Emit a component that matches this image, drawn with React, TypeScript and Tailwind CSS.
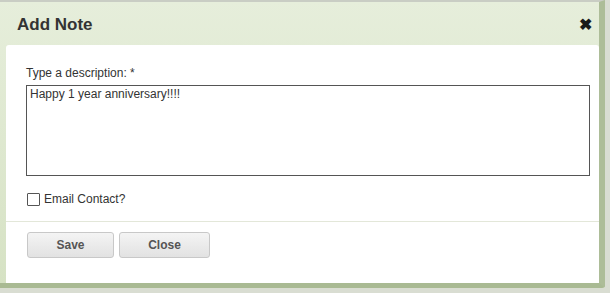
import React from "react";

export default function App() {
  return (
    <div className="w-[610px] h-[293px] bg-[#d9ddd2] overflow-hidden" style={{ fontFamily: '"Liberation Sans", Arial, sans-serif' }}>
      <div className="w-[605px] h-[288px] flex flex-col border-t-2 border-t-[#c9cdc4] bg-gradient-to-b from-[#e6eedb] to-[#d6e2c4] border-r-[6px] border-r-[#adbd98] border-b-[5px] border-b-[#a9ba93] rounded-br-[3px]">
        <div className="h-[43px] flex items-center justify-between pl-[17px] pr-[7px] shrink-0">
          <span className="text-[17px] font-bold text-[#333] leading-none mt-[1px]">Add Note</span>
          <span className="text-[16px] text-[#1a1a1a] leading-none mt-[3px] font-bold">✖</span>
        </div>
        <div className="flex-1 ml-[6px] mr-0 bg-white rounded-t-[3px] flex flex-col">
          <div className="px-[20px] pt-[21px] pb-[0px] flex flex-col">
            <label className="text-[12px] text-[#333] leading-[14px]">Type a description: *</label>
            <div className="mt-[5px] h-[91px] w-[564px] border border-[#555] px-[3px] pt-[1px] text-[12px] text-[#333] leading-[14px]">
              Happy 1 year anniversary!!!!
            </div>
            <div className="mt-[17px] flex items-center gap-[4px] ml-[1px]">
              <span className="w-[13px] h-[13px] border border-[#555] bg-white rounded-[1px]" />
              <span className="text-[12px] text-[#333] leading-[14px] -mt-[2px]">Email Contact?</span>
            </div>
          </div>
          <div className="mt-[15px] border-t border-[#e3e7d9]" />
          <div className="px-[21px] pt-[10px] flex gap-[5px]">
            <button className="w-[87px] h-[26px] rounded-[3px] border border-[#c8c8c8] bg-gradient-to-b from-[#f4f4f4] to-[#e2e2e2] text-[12px] font-bold text-[#555]">Save</button>
            <button className="w-[91px] h-[26px] rounded-[3px] border border-[#c8c8c8] bg-gradient-to-b from-[#f4f4f4] to-[#e2e2e2] text-[12px] font-bold text-[#555]">Close</button>
          </div>
        </div>
      </div>
    </div>
  );
}
